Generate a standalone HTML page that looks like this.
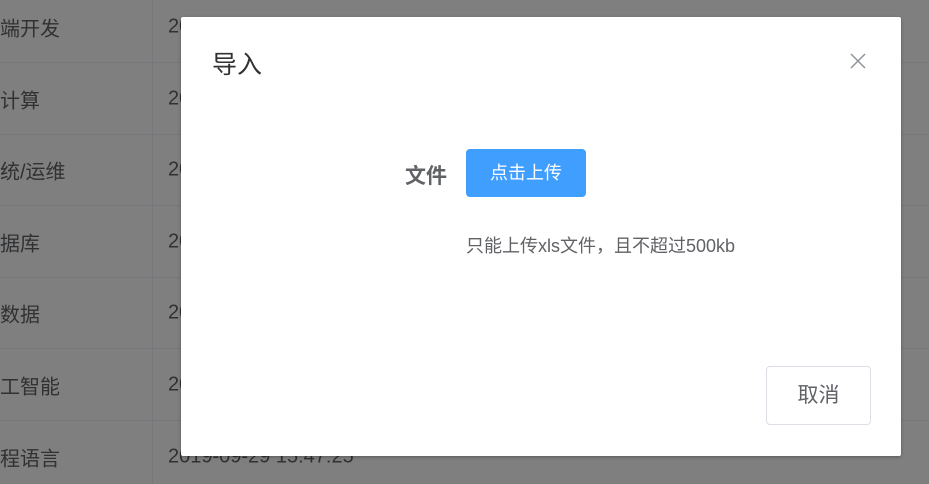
<!DOCTYPE html>
<html><head><meta charset="utf-8"><style>
html,body{margin:0;width:929px;height:484px;overflow:hidden}
body{background:#fff;font-family:"Liberation Sans","Noto Sans CJK SC",sans-serif;position:relative}
.bg{position:absolute;inset:0;background:#fff}
.row{position:absolute;left:0;width:929px;height:71px;border-bottom:1px solid #ebeef5;color:#606266;font-size:20px}
.row span{position:absolute;top:50%;transform:translateY(-50%)}
.c1{left:-20px}.c2{left:168px}
.vline{position:absolute;left:152px;top:0;width:1px;height:484px;background:#ebeef5}
.mask{position:absolute;inset:0;background:rgba(0,0,0,.5)}
.dlg{position:absolute;left:181px;top:17px;width:720px;height:439px;background:#fff;border-radius:2px;box-shadow:0 1px 3px rgba(0,0,0,.3)}
.title{position:absolute;left:31px;top:33px;font-size:25px;color:#303133;line-height:30px}
.close{position:absolute;left:669px;top:36px}
.lbl{position:absolute;left:224px;top:143px;font-size:21px;font-weight:bold;color:#606266}
.btn{position:absolute;left:285px;top:132px;width:120px;height:48px;background:#409eff;border-radius:4px;color:#fff;font-size:18px;text-align:center;line-height:48px}
.tip{position:absolute;left:285px;top:215px;font-size:18px;color:#606266}
.cancel{position:absolute;left:585px;top:349px;width:105px;height:59px;border:1px solid #dcdfe6;border-radius:4px;box-sizing:border-box;text-align:center;line-height:57px;font-size:21px;color:#606266}
</style></head><body>
<div class="bg"></div>
<div class="row" style="top:-9px"><span class="c1">前端开发</span><span class="c2">2019-09-29 15:47:25</span></div>
<div class="row" style="top:63px"><span class="c1">云计算</span><span class="c2">2019-09-29 15:47:25</span></div>
<div class="row" style="top:134px"><span class="c1">系统/运维</span><span class="c2">2019-09-29 15:47:25</span></div>
<div class="row" style="top:206px"><span class="c1">数据库</span><span class="c2">2019-09-29 15:47:25</span></div>
<div class="row" style="top:277px"><span class="c1">大数据</span><span class="c2">2019-09-29 15:47:25</span></div>
<div class="row" style="top:349px"><span class="c1">人工智能</span><span class="c2">2019-09-29 15:47:25</span></div>
<div class="row" style="top:421px;height:63px;border-bottom:0"><span class="c1" style="top:36px">编程语言</span><span class="c2" style="top:36px">2019-09-29 15:47:25</span></div>
<div class="vline"></div>
<div class="mask"></div>
<div class="dlg">
<div class="title">导入</div>
<svg class="close" width="16" height="16" viewBox="0 0 16 16"><path d="M1 1L15 15M15 1L1 15" stroke="#909399" stroke-width="1.5"/></svg>
<div class="lbl">文件</div>
<div class="btn">点击上传</div>
<div class="tip">只能上传xls文件，且不超过500kb</div>
<div class="cancel">取消</div>
</div>
</body></html>
